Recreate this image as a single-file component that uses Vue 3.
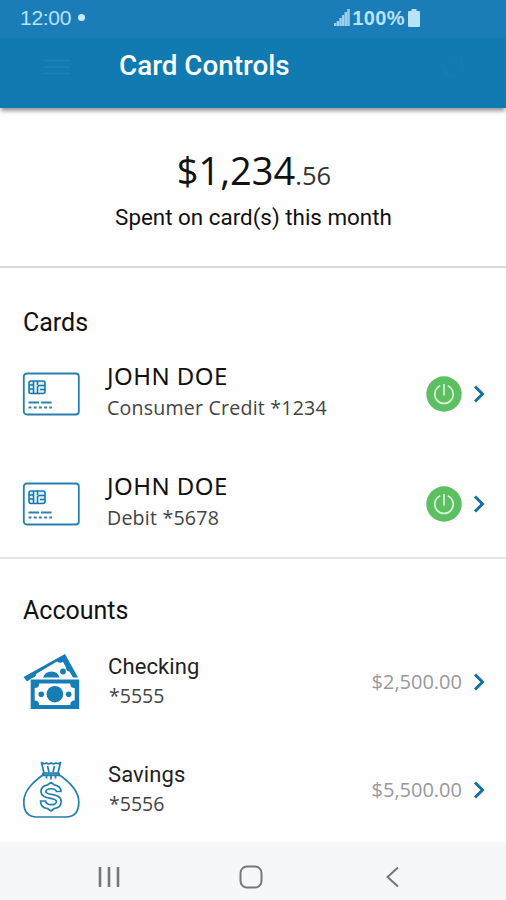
<script setup>
const cards = [
  { name: 'JOHN DOE', detail: 'Consumer Credit *1234', key: 'credit' },
  { name: 'JOHN DOE', detail: 'Debit *5678', key: 'debit' },
]
const accounts = [
  { name: 'Checking', detail: '*5555', amount: '$2,500.00', icon: 'cash' },
  { name: 'Savings', detail: '*5556', amount: '$5,500.00', icon: 'bag' },
]
const signal = [3, 5, 8, 11, 14, 17]
</script>

<template>
  <div class="screen">
    <div class="status">
      <span class="clock">12:00</span><span class="dot"></span>
      <div class="indicators">
        <svg class="signal" width="16" height="17" viewBox="0 0 16 17">
          <rect v-for="(h, i) in signal" :key="i" :x="i * 2.65" :y="17 - h" width="2.5" :height="h" />
        </svg>
        <span class="percent">100%</span>
        <svg class="battery" width="12" height="18" viewBox="0 0 12 18">
          <path d="M3.5 0h5v2H11q1 0 1 1v14q0 1-1 1H1q-1 0-1-1V3q0-1 1-1h2.500z" />
        </svg>
      </div>
    </div>
    <header class="bar">
      <svg class="menu" width="26" height="16" viewBox="0 0 26 16">
        <path d="M0 1.500h26M0 8h26M0 14.500h26" />
      </svg>
      <h1>Card Controls</h1>
      <svg class="refresh" width="24" height="24" viewBox="0 0 24 24">
        <path d="M3 16A10 10 0 0 1 20 6M21 8A10 10 0 0 1 4 18M20 1v6h-6M4 23v-6h6" />
      </svg>
    </header>

    <section class="summary">
      <div class="total"><span class="whole">$1,234</span><span class="cents">.56</span></div>
      <p class="caption">Spent on card(s) this month</p>
    </section>

    <section class="cards">
      <h2>Cards</h2>
      <div v-for="c in cards" :key="c.key" class="row">
        <svg class="icon" width="58" height="44" viewBox="0 0 58 44">
          <rect x="1.800" y="1.500" width="55" height="41" rx="3" fill="#fff" stroke="#267fae" stroke-width="1.800" />
          <rect x="7" y="9" width="16" height="12.500" rx="2" fill="#dceef6" stroke="#1479b0" stroke-width="1.600" />
          <path d="M11.500 9v12.500M7 13h4.500M7 17h4.500M15.500 21v-5.500q0-2 2-2h5.500M15.500 9v4M18 17.500h5" fill="none" stroke="#1479b0" stroke-width="1.500" />
          <path d="M6.500 30.500H17M19 30.500h10.500" stroke="#2b82b3" stroke-width="2" />
          <path d="M6.500 35.500h23.500" stroke="#397fa5" stroke-width="2" stroke-dasharray="3 2.200" />
        </svg>
        <div class="info">
          <div class="holder">{{ c.name }}</div>
          <div class="detail" :class="c.key">{{ c.detail }}</div>
        </div>
        <svg class="power" width="36" height="36" viewBox="0 0 36 36">
          <circle cx="18" cy="18" r="17.700" fill="#5cbf61" />
          <path d="M14.300 9.800A9.200 9.200 0 1 0 21.700 9.800M18 8v11.500" fill="none" stroke="#d9f5d5" stroke-width="1.700" />
        </svg>
        <svg class="chevron" width="12" height="18" viewBox="0 0 12 18"><path d="M2 1.500L9.500 9 2 16.500" /></svg>
      </div>
    </section>

    <section class="accounts">
      <h2>Accounts</h2>
      <div v-for="a in accounts" :key="a.name" class="row">
        <svg v-if="a.icon === 'cash'" class="icon" width="58" height="58" viewBox="0 0 58 58">
          <path d="M1.500 24L43 1l13 23.500h-5l-3.500-6q-3.500 0-3.500-4l-3-5.700q-3 2-6-.3L14 21q0 3.500-4 4L5 28.500z" fill="#167db5" />
          <path d="M21 24.500q2-6 8.500-6t8 6z" fill="#167db5" />
          <circle cx="41" cy="18.500" r="2.900" fill="#167db5" />
          <rect x="8.700" y="26.500" width="48.500" height="29.500" fill="#167db5" />
          <path d="M17.200 30.500h31q0 4.500 4.500 4.500v12.500q-4.500 0-4.500 4.500h-31q0-4.500-4.500-4.500V35q4.500 0 4.500-4.500z" fill="#fff" />
          <circle cx="32.900" cy="41.200" r="8.300" fill="#167db5" />
          <circle cx="19.200" cy="41.200" r="2.800" fill="#167db5" />
          <circle cx="46.700" cy="41.200" r="2.800" fill="#167db5" />
        </svg>
        <svg v-else class="icon" width="58" height="58" viewBox="0 0 58 58" fill="none" stroke="#237fab" stroke-width="1.700" stroke-linejoin="round">
          <path d="M22 13C14 19 1.800 28 1.800 41c0 10 5 15 13 15h29c8 0 13-5 13-15C56.800 28 45 19 36 13z" />
          <path d="M22 12l-2.500-10.500q3 2 4.800.3 2.300 2 4.700 0 2.500 2 5 0 2 1.700 4.500-.3L36 12zM21 12h16v2.500H21zM25.500 5l1.500 6M32.500 5L31 11M24.500 14.500v3M29 14.500v4M33.500 14.500v3" />
          <path d="M39 30.500c0-4-3-6-6.700-6.700L29 21.500l-3.300 2.300c-4 .7-6.700 3-6.700 6.700 0 8.500 15.500 5.500 15.500 10 0 4.300-10.500 4.300-10.800-.5H18.500c0 4.500 3 7 7 7.500L29 50l3.200-2.500c4-.5 7-3 7-7 0-9-15.300-5.500-15.300-9.700 0-4 10.500-4 10.500-.3z" />
        </svg>
        <div class="info">
          <div class="acct" :class="a.icon">{{ a.name }}</div>
          <div class="number">{{ a.detail }}</div>
        </div>
        <span class="amount">{{ a.amount }}</span>
        <svg class="chevron" width="12" height="18" viewBox="0 0 12 18"><path d="M2 1.500L9.500 9 2 16.500" /></svg>
      </div>
    </section>

    <nav class="nav">
      <svg width="22" height="22" viewBox="0 0 22 22"><path d="M2 1v20M11 1v20M20 1v20" stroke-width="2.600" /></svg>
      <svg width="24" height="24" viewBox="0 0 24 24"><rect x="1.500" y="1.500" width="21" height="21" rx="6.500" stroke-width="2" /></svg>
      <svg width="22" height="22" viewBox="0 0 22 22"><path d="M16 1.500L5.500 11 16 20.500" stroke-width="2" /></svg>
    </nav>
  </div>
</template>

<style>
body { margin: 0; background: #fff; }
</style>

<style scoped>
.screen {
  display: flex;
  flex-direction: column;
  width: 506px;
  height: 900px;
  overflow: hidden;
  background: #fefefe;
  color: #111;
  font-family: Roboto, sans-serif;
}
svg { display: block; flex: none; }
h1, h2, p { margin: 0; font-weight: 400; }
.status {
  box-sizing: border-box;
  flex: none;
  display: flex;
  align-items: center;
  height: 38px;
  padding: 0 86px 3px 20px;
  background: #1b7db7;
  color: #b9e2f8;
}
.clock { font: 21px/24px "Liberation Sans", sans-serif; letter-spacing: -0.3px; }
.dot { width: 7px; height: 7px; margin-left: 7px; border-radius: 50%; background: #c7e9fa; }
.indicators { display: flex; align-items: center; margin-left: auto; }
.signal { fill: #9dd0ee; }
.percent { margin: 0 3px 0 2px; font: bold 20px/24px "Liberation Sans", sans-serif; letter-spacing: 0.4px; }
.battery { fill: #b9e4f8; }
.bar {
  box-sizing: border-box;
  flex: none;
  display: flex;
  align-items: center;
  height: 70px;
  padding: 0 41px 14px 44px;
  background: #107ab1;
  box-shadow: 0 4px 4px -1px rgba(0, 0, 0, 0.4);
}
.menu, .refresh { fill: none; stroke: #1c83ba; stroke-width: 1.500; }
.menu { margin-top: 2px; }
h1 { margin-left: 49px; color: #fff; font-size: 27.8px; font-weight: 500; line-height: 34px; white-space: nowrap; }
.refresh { margin-left: auto; stroke: #147db4; }
.summary {
  box-sizing: border-box;
  flex: none;
  height: 160px;
  padding-top: 37px;
  border-bottom: 2px solid #d8d8d8;
  text-align: center;
}
.total { height: 50px; padding-left: 2px; font-family: "Open Sans", sans-serif; font-weight: 400; line-height: 50px; white-space: nowrap; }
.whole { font-size: 38px; }
.cents { font-size: 25.5px; color: #333; }
.caption { margin-top: 8px; padding-left: 1px; font-size: 22.4px; line-height: 28px; }
.cards { box-sizing: border-box; flex: none; height: 291px; border-bottom: 2px solid #e5e5e5; }
h2 { font-size: 25px; line-height: 30px; padding-left: 23px; }
.cards h2 { padding-top: 40px; padding-bottom: 1px; }
.row { display: flex; align-items: center; height: 110px; padding: 0 21px 0 22px; }
.info { margin-left: 27px; white-space: nowrap; }
.holder { font: 24px/32px "Noto Sans", sans-serif; letter-spacing: 0.45px; margin-top: -5px; }
.detail { font: 400 19.6px/30px "Open Sans", sans-serif; letter-spacing: 0.2px; color: #444; padding-top: 1px; }
.power { margin-left: auto; }
.chevron { margin-left: 11px; fill: none; stroke: #176f9f; stroke-width: 3; }
.accounts { flex: 1; min-height: 0; overflow: hidden; }
.accounts h2 { padding-top: 37px; padding-bottom: 2px; }
.accounts .row { height: 108px; }
.acct { font-size: 22px; line-height: 28px; letter-spacing: 0.1px; color: #222; padding-left: 1px; margin-top: -2px; }
.number { font: 400 19.5px/29px "Open Sans", sans-serif; color: #444; padding-left: 2px; }
.amount { margin-left: auto; font: 400 20px/28px "Open Sans", sans-serif; color: #999; }
.nav {
  box-sizing: border-box;
  flex: none;
  display: flex;
  align-items: center;
  justify-content: space-between;
  height: 58px;
  padding: 12px 102px 0 98px;
  background: #f5f7f8;
}
.nav svg { fill: none; stroke: #777; }
</style>
